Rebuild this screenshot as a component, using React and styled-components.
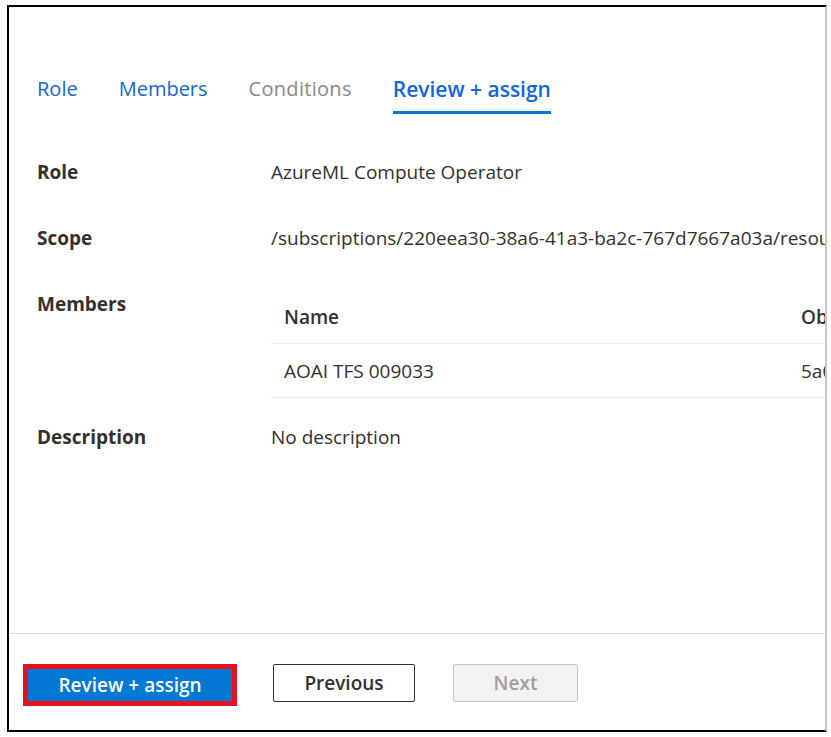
import React from "react";
import styled, { createGlobalStyle } from "styled-components";

const GlobalStyle = createGlobalStyle`
  body {
    margin: 0;
    background: #fff;
    font-family: "Open Sans", "Noto Sans", sans-serif;
    color: #323130;
  }
`;

const Frame = styled.div`
  box-sizing: border-box;
  margin: 5px 0 0 7px;
  width: 820px;
  height: 727px;
  border: 2px solid #000;
  border-right: 2px solid #c8c8c8;
  display: flex;
  flex-direction: column;
  overflow: hidden;
`;

const Main = styled.div`
  flex: 1;
  padding: 68px 0 0 28px;
  overflow: hidden;
`;

const Tabs = styled.div`
  display: flex;
  gap: 41px;
`;

const Tab = styled.div`
  font-size: ${(p) => (p.active ? "21px" : "20px")};
  line-height: 28px;
  padding-bottom: 8px;
  white-space: nowrap;
  letter-spacing: ${(p) => (p.disabled ? "0.3px" : "0")};
  color: ${(p) => (p.disabled ? "#8a8886" : "#1166d8")};
  font-weight: ${(p) => (p.active ? 600 : 400)};
  border-bottom: 3px solid ${(p) => (p.active ? "#0078d4" : "transparent")};
`;

const Details = styled.div`
  margin-top: 25px;
`;

const Row = styled.div`
  display: grid;
  grid-template-columns: 234px 1fr;
  padding: 20px 0 ${(p) => p.bottom || "20px"};
  font-size: 19px;
  line-height: 26px;
`;

const Label = styled.div`
  font-weight: 700;
  color: #323130;
`;

const Value = styled.div`
  white-space: nowrap;
  color: #323130;
`;

const Table = styled.div`
  display: grid;
  grid-template-columns: 517px 300px;
  margin-top: -1px;
`;

const Cell = styled.div`
  padding: 0 13px;
  height: 53px;
  display: flex;
  align-items: center;
  white-space: nowrap;
  font-weight: ${(p) => (p.head ? 600 : 400)};
  border-bottom: 1px solid #edebe9;
`;

const Footer = styled.div`
  border-top: 1px solid #e1dfdd;
  height: 97px;
  padding: 30px 0 0 14px;
  box-sizing: border-box;
  display: flex;
  align-items: flex-start;
`;

const Button = styled.button`
  box-sizing: border-box;
  font-family: inherit;
  font-size: 19px;
  font-weight: 600;
  border-radius: 2px;
  height: 38px;
  padding: 0;
  width: ${(p) => p.w};
  margin-right: ${(p) => p.gap || "0"};
  background: #fff;
  border: 1px solid #323130;
  color: #323130;
  cursor: pointer;
`;

const PrimaryButton = styled(Button)`
  height: 42px;
  background: #0078d4;
  color: #fff;
  border: 5px solid #e81123;
  border-radius: 0;
`;

const DisabledButton = styled(Button)`
  background: #f3f2f1;
  border-color: #c8c6c4;
  color: #a19f9d;
  cursor: not-allowed;
`;

export default function App() {
  return (
    <>
      <GlobalStyle />
      <Frame>
        <Main>
          <Tabs>
            <Tab>Role</Tab>
            <Tab>Members</Tab>
            <Tab disabled>Conditions</Tab>
            <Tab active>Review + assign</Tab>
          </Tabs>
          <Details>
            <Row>
              <Label>Role</Label>
              <Value>AzureML Compute Operator</Value>
            </Row>
            <Row>
              <Label>Scope</Label>
              <Value>
                /subscriptions/220eea30-38a6-41a3-ba2c-767d7667a03a/resourceGroups/rg-aoai
              </Value>
            </Row>
            <Row bottom="6px">
              <Label>Members</Label>
              <Table>
                <Cell head>Name</Cell>
                <Cell head>Object ID</Cell>
                <Cell>AOAI TFS 009033</Cell>
                <Cell>5a0c3e2f-7b1d-4f6a-9c8e-2d4b1a7e6f30</Cell>
              </Table>
            </Row>
            <Row>
              <Label>Description</Label>
              <Value>No description</Value>
            </Row>
          </Details>
        </Main>
        <Footer>
          <PrimaryButton w="214px" gap="36px">
            Review + assign
          </PrimaryButton>
          <Button w="142px" gap="38px">
            Previous
          </Button>
          <DisabledButton w="125px" disabled>
            Next
          </DisabledButton>
        </Footer>
      </Frame>
    </>
  );
}
